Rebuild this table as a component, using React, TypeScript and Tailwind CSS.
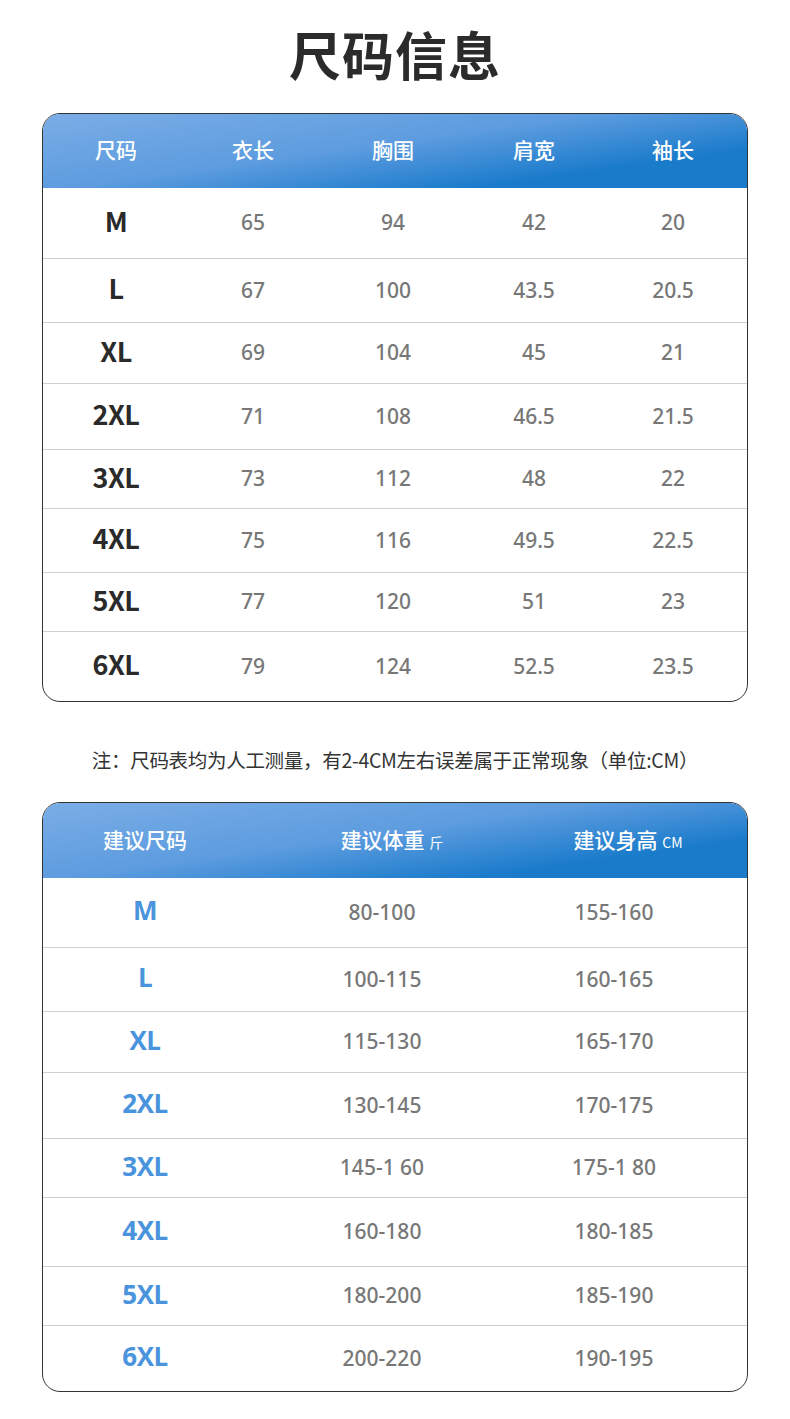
const sizeRows = [
  { size: "M", len: "65", chest: "94", shoulder: "42", sleeve: "20", h: "h-[70px]" },
  { size: "L", len: "67", chest: "100", shoulder: "43.5", sleeve: "20.5", h: "h-[64px]" },
  { size: "XL", len: "69", chest: "104", shoulder: "45", sleeve: "21", h: "h-[61px]" },
  { size: "2XL", len: "71", chest: "108", shoulder: "46.5", sleeve: "21.5", h: "h-[66px]" },
  { size: "3XL", len: "73", chest: "112", shoulder: "48", sleeve: "22", h: "h-[59px]" },
  { size: "4XL", len: "75", chest: "116", shoulder: "49.5", sleeve: "22.5", h: "h-[64px]" },
  { size: "5XL", len: "77", chest: "120", shoulder: "51", sleeve: "23", h: "h-[59px]" },
  { size: "6XL", len: "79", chest: "124", shoulder: "52.5", sleeve: "23.5", h: "h-[70px]" },
];

const fitRows = [
  { size: "M", weight: "80-100", height: "155-160", h: "h-[69px]" },
  { size: "L", weight: "100-115", height: "160-165", h: "h-[64px]" },
  { size: "XL", weight: "115-130", height: "165-170", h: "h-[61px]" },
  { size: "2XL", weight: "130-145", height: "170-175", h: "h-[66px]" },
  { size: "3XL", weight: "145-1 60", height: "175-1 80", h: "h-[59px]" },
  { size: "4XL", weight: "160-180", height: "180-185", h: "h-[69px]" },
  { size: "5XL", weight: "180-200", height: "185-190", h: "h-[59px]" },
  { size: "6XL", weight: "200-220", height: "190-195", h: "h-[66px]" },
];

const headerBg =
  "bg-[linear-gradient(172deg,#7aade6_0%,#5d9cdf_45%,#1a7bcb_78%,#1a7bcb_100%)]";

export default function App() {
  return (
    <div className="w-[790px] min-h-[1419px] bg-white font-['Noto_Sans_CJK_SC','Open_Sans',sans-serif]">
      {/* Title */}
      <h1 className="pt-[22px] text-center text-[52px] leading-[64px] font-bold text-[#2b2b2b] tracking-[1px]">
        尺码信息
      </h1>

      {/* Size table */}
      <div className="mx-[42px] mt-[27px] overflow-hidden rounded-[18px] border border-[#333]">
        <div
          className={`grid h-[74px] grid-cols-[146px_128px_152px_130px_1fr] items-center text-center text-[21px] font-medium text-white ${headerBg}`}
        >
          <span className="pb-[2px]">尺码</span>
          <span className="pb-[2px]">衣长</span>
          <span className="pb-[2px]">胸围</span>
          <span className="pb-[2px]">肩宽</span>
          <span className="pb-[2px]">袖长</span>
        </div>
        {sizeRows.map((r, i) => (
          <div
            key={r.size}
            className={`grid grid-cols-[146px_128px_152px_130px_1fr] items-center text-center ${r.h} ${
              i > 0 ? "border-t border-[#cfcfcf]" : ""
            }`}
          >
            <span className="pb-[4px] text-[27px] font-bold text-[#2a2a2a] tracking-[-0.5px]">
              {r.size}
            </span>
            <span className="font-['Noto_Sans'] text-[21px] font-medium text-[#777]">{r.len}</span>
            <span className="font-['Noto_Sans'] text-[21px] font-medium text-[#777]">{r.chest}</span>
            <span className="font-['Noto_Sans'] text-[21px] font-medium text-[#777]">{r.shoulder}</span>
            <span className="font-['Noto_Sans'] text-[21px] font-medium text-[#777]">{r.sleeve}</span>
          </div>
        ))}
      </div>

      {/* Note */}
      <p className="mt-[44px] text-center text-[19.5px] leading-[28px] text-[#333] tracking-[-0.3px]">
        注：尺码表均为人工测量，有2-4CM左右误差属于正常现象（单位:CM）
      </p>

      {/* Recommended size table */}
      <div className="mx-[42px] mt-[28px] overflow-hidden rounded-[18px] border border-[#333]">
        <div
          className={`grid h-[75px] grid-cols-[204px_270px_1fr] items-center text-center text-[21px] font-medium text-white ${headerBg}`}
        >
          <span className="pb-[2px]">建议尺码</span>
          <span className="pb-[2px] pl-[20px]">
            建议体重 <span className="text-[14px] font-normal">斤</span>
          </span>
          <span className="pb-[2px] pr-[8px]">
            建议身高 <span className="text-[14px] font-normal">CM</span>
          </span>
        </div>
        {fitRows.map((r, i) => (
          <div
            key={r.size}
            className={`grid grid-cols-[204px_270px_1fr] items-center text-center ${r.h} ${
              i > 0 ? "border-t border-[#cfcfcf]" : ""
            }`}
          >
            <span className="pb-[4px] font-['Open_Sans'] text-[26px] font-bold text-[#4a93dd] tracking-[-0.5px]">
              {r.size}
            </span>
            <span className="font-['Noto_Sans'] text-[21px] font-medium text-[#777]">{r.weight}</span>
            <span className="pr-[36px] font-['Noto_Sans'] text-[21px] font-medium text-[#777]">{r.height}</span>
          </div>
        ))}
      </div>
    </div>
  );
}
